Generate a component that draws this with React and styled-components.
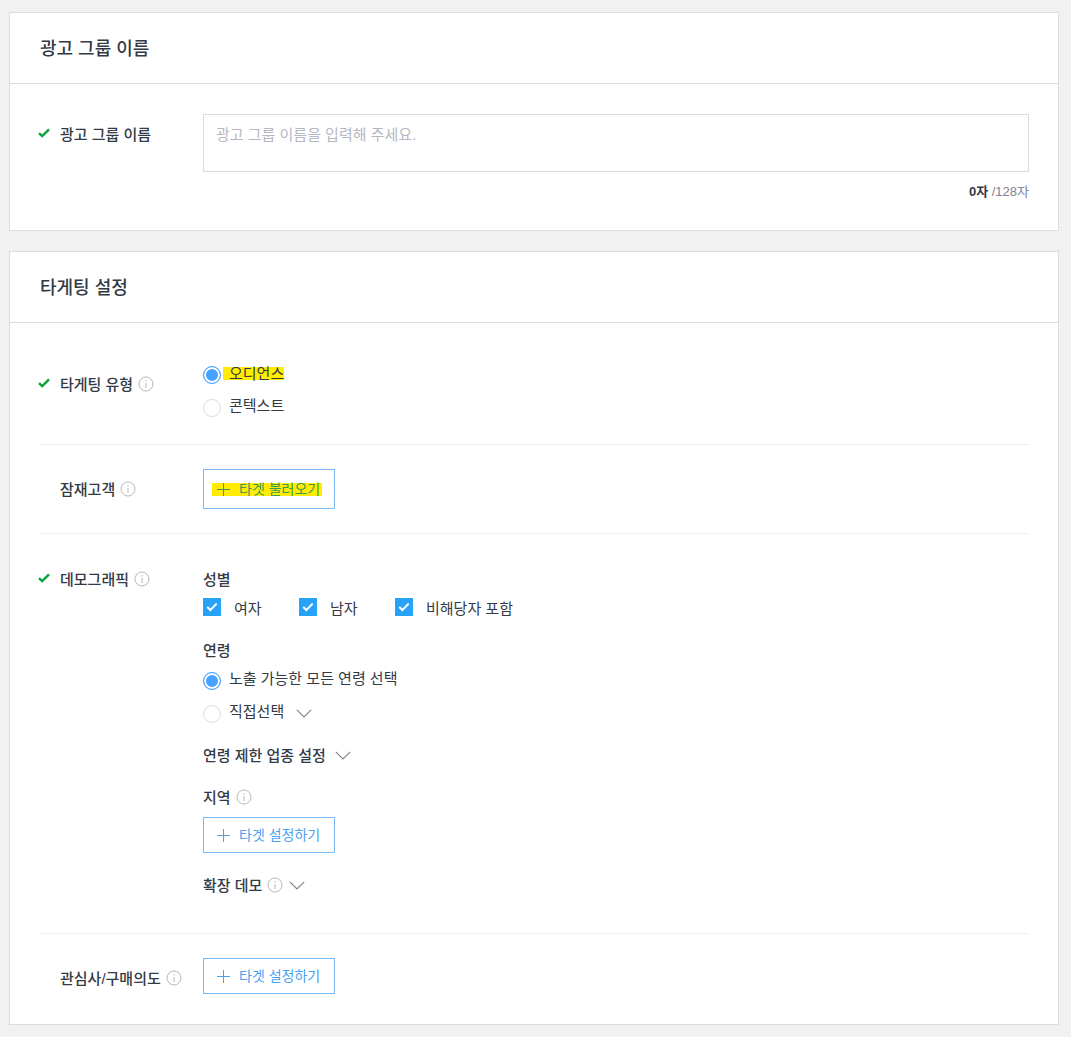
import React from 'react';
import styled, { createGlobalStyle } from 'styled-components';

const GlobalStyle = createGlobalStyle`
  html, body { margin: 0; padding: 0; background: #f1f1f1; }
  body {
    font-family: "Liberation Sans", "Noto Sans CJK KR", sans-serif;
    font-size: 15px;
    color: #333a45;
  }
`;

const Page = styled.div`
  width: 1050px;
  margin-left: 9px;
  padding: 12px 0;
  display: flex;
  flex-direction: column;
  gap: 20px;
`;

const Card = styled.section`
  background: #fff;
  border: 1px solid #dcdde4;
`;

const CardHeader = styled.h2`
  margin: 0;
  height: 71px;
  box-sizing: border-box;
  padding: 0 30px 2px;
  display: flex;
  align-items: center;
  font-size: 18px;
  font-weight: 500;
  border-bottom: 1px solid #dcdde4;
`;

const CardBody = styled.div`
  padding: ${p => p.$pad || '0 29px 0 30px'};
`;

const Row = styled.div`
  display: flex;
  align-items: flex-start;
  padding: ${p => p.$pad};
  border-top: ${p => (p.$first ? 'none' : '1px solid #eeeff2')};
`;

const LabelCol = styled.div`
  width: 163px;
  flex: none;
  display: flex;
  align-items: center;
  height: 20px;
  margin-top: ${p => p.$top || 0}px;
  font-size: 15px;
  font-weight: 500;
  white-space: nowrap;
`;

const CheckSlot = styled.span`
  width: 22px;
  margin-left: -2px;
  flex: none;
  display: flex;
  align-items: center;
`;

const Info = styled.svg`
  width: 16px;
  height: 16px;
  margin-left: 5px;
  margin-top: 2px;
  flex: none;
`;

const Content = styled.div`
  flex: 1;
  min-width: 0;
`;

const NameBox = styled.div`
  height: 58px;
  box-sizing: border-box;
  border: 1px solid #d9dbe2;
  padding: 10px 12px;
  font-size: 15px;
  line-height: 20px;
  color: #b4b8c1;
`;

const Counter = styled.div`
  margin-top: 11px;
  height: 18px;
  line-height: 18px;
  text-align: right;
  font-size: 13px;
  color: #7f8391;
`;

const CounterNow = styled.b`
  color: #333a45;
  font-weight: 700;
`;

const OptionList = styled.div`
  display: flex;
  flex-direction: column;
  gap: 13px;
  margin-top: ${p => p.$top || 0}px;
`;

const OptionRow = styled.label`
  display: flex;
  align-items: center;
  height: 20px;
  font-size: 15px;
  line-height: 20px;
`;

const RadioDot = styled.span`
  width: 18px;
  height: 18px;
  box-sizing: border-box;
  border-radius: 50%;
  flex: none;
  margin-right: 8px;
  margin-top: 3px;
  border: 1px solid ${p => (p.$on ? '#45a3ff' : '#dcdde1')};
  background: ${p => (p.$on ? '#45a3ff' : '#fff')};
  box-shadow: ${p => (p.$on ? 'inset 0 0 0 2px #fff' : 'none')};
`;

const OptionText = styled.span`
  margin-top: 0;
`;

const Highlighted = styled.span`
  display: block;
  height: 13px;
  line-height: 13px;
  background: #ffec00;
  padding-left: 6px;
  margin-left: -6px;
`;

const TargetButton = styled.button`
  display: flex;
  align-items: center;
  height: ${p => p.$height}px;
  width: 132px;
  margin-top: ${p => p.$top || 0}px;
  box-sizing: border-box;
  padding: 0 0 0 13px;
  background: #fff;
  border: 1px solid #7ab8f5;
  color: #49a0f2;
  font: inherit;
  font-size: 14px;
`;

const ButtonInner = styled.span`
  display: flex;
  align-items: center;
  gap: 9px;
  height: 13px;
  padding: 0 2px 0 0;
  margin-left: ${p => (p.$mark ? '-5px' : '0')};
  padding-left: ${p => (p.$mark ? '5px' : '0')};
  background: ${p => (p.$mark ? '#ffec00' : 'transparent')};
  color: ${p => (p.$mark ? '#3c9a52' : 'inherit')};
`;

const ButtonLabel = styled.span`
  margin-top: -2px;
`;

const GroupTitle = styled.div`
  display: flex;
  align-items: center;
  height: 20px;
  font-weight: 500;
  font-size: 15px;
  margin-top: ${p => p.$top || 0}px;
`;

const CheckRow = styled.div`
  display: flex;
  margin-top: 9px;
  height: 20px;
  align-items: center;
`;

const CheckItem = styled.label`
  width: ${p => p.$w}px;
  display: flex;
  align-items: center;
  white-space: nowrap;
`;

const CheckBox = styled.span`
  width: 18px;
  height: 18px;
  flex: none;
  margin-right: 13px;
  background: #26a2f8;
  display: flex;
  align-items: center;
  justify-content: center;
`;

const Chevron = styled.svg`
  width: 16px;
  height: 9px;
  margin-left: ${p => p.$left || 9}px;
  margin-top: 2px;
  flex: none;
`;

const Tick = () => (
  <CheckSlot>
    <svg width="12" height="10" viewBox="0 0 12 10">
      <path d="M1 5.2l3.2 3L11 1.4" fill="none" stroke="#0aa33a" strokeWidth="2.4" />
    </svg>
  </CheckSlot>
);

const InfoIcon = () => (
  <Info viewBox="0 0 16 16">
    <circle cx="8" cy="8" r="7" fill="none" stroke="#b5b7bc" strokeWidth="1" />
    <path d="M8 4v1.5M8 7v5" stroke="#b5b7bc" strokeWidth="1" fill="none" />
  </Info>
);

const Down = ({ left }) => (
  <Chevron $left={left} viewBox="0 0 16 9">
    <path d="M.8.8L8 8l7.2-7.2" fill="none" stroke="#80838a" strokeWidth="1.1" />
  </Chevron>
);

const Plus = ({ color }) => (
  <svg width="13" height="13" viewBox="0 0 13 13" style={{ flex: 'none' }}>
    <path d="M6.5 0v13M0 6.5h13" stroke={color} strokeWidth="1" />
  </svg>
);

const Box = () => (
  <CheckBox>
    <svg width="12" height="10" viewBox="0 0 12 10">
      <path d="M1.3 5l3 3 6.4-6.4" fill="none" stroke="#fff" strokeWidth="2" />
    </svg>
  </CheckBox>
);

const App = () => (
  <Page>
    <GlobalStyle />
    <Card>
      <CardHeader>광고 그룹 이름</CardHeader>
      <CardBody $pad="30px 29px 29px 30px">
        <Row $first $pad="0">
          <LabelCol $top={9}>
            <Tick />광고 그룹 이름
          </LabelCol>
          <Content>
            <NameBox>광고 그룹 이름을 입력해 주세요.</NameBox>
            <Counter>
              <CounterNow>0자</CounterNow> /128자
            </Counter>
          </Content>
        </Row>
      </CardBody>
    </Card>

    <Card>
      <CardHeader>타게팅 설정</CardHeader>
      <CardBody>
        <Row $first $pad="40px 0 28px">
          <LabelCol $top={10}>
            <Tick />타게팅 유형<InfoIcon />
          </LabelCol>
          <Content>
            <OptionList>
              <OptionRow>
                <RadioDot $on />
                <OptionText><Highlighted>오디언스</Highlighted></OptionText>
              </OptionRow>
              <OptionRow>
                <RadioDot />
                <OptionText>콘텍스트</OptionText>
              </OptionRow>
            </OptionList>
          </Content>
        </Row>

        <Row $pad="24px 0 24px">
          <LabelCol $top={9}>
            <CheckSlot />잠재고객<InfoIcon />
          </LabelCol>
          <Content>
            <TargetButton $height={40}>
              <ButtonInner $mark>
                <Plus color="#3c9a52" /><ButtonLabel>타겟 불러오기</ButtonLabel>
              </ButtonInner>
            </TargetButton>
          </Content>
        </Row>

        <Row $pad="34px 0 39px">
          <LabelCol>
            <Tick />데모그래픽<InfoIcon />
          </LabelCol>
          <Content>
            <GroupTitle>성별</GroupTitle>
            <CheckRow>
              <CheckItem $w={96}><Box />여자</CheckItem>
              <CheckItem $w={96}><Box />남자</CheckItem>
              <CheckItem $w={130}><Box />비해당자 포함</CheckItem>
            </CheckRow>
            <GroupTitle $top={22}>연령</GroupTitle>
            <OptionList $top={10}>
              <OptionRow>
                <RadioDot $on />
                <OptionText>노출 가능한 모든 연령 선택</OptionText>
              </OptionRow>
              <OptionRow>
                <RadioDot />
                <OptionText>직접선택</OptionText>
                <Down left={12} />
              </OptionRow>
            </OptionList>
            <GroupTitle $top={22}>연령 제한 업종 설정<Down /></GroupTitle>
            <GroupTitle $top={22}>지역<InfoIcon /></GroupTitle>
            <TargetButton $height={36} $top={11}>
              <ButtonInner>
                <Plus color="#49a0f2" /><ButtonLabel>타겟 설정하기</ButtonLabel>
              </ButtonInner>
            </TargetButton>
            <GroupTitle $top={21}>확장 데모<InfoIcon /><Down left={6} /></GroupTitle>
          </Content>
        </Row>

        <Row $pad="24px 0 30px">
          <LabelCol $top={9}>
            <CheckSlot />관심사/구매의도<InfoIcon />
          </LabelCol>
          <Content>
            <TargetButton $height={36}>
              <ButtonInner>
                <Plus color="#49a0f2" /><ButtonLabel>타겟 설정하기</ButtonLabel>
              </ButtonInner>
            </TargetButton>
          </Content>
        </Row>
      </CardBody>
    </Card>
  </Page>
);

export default App;
